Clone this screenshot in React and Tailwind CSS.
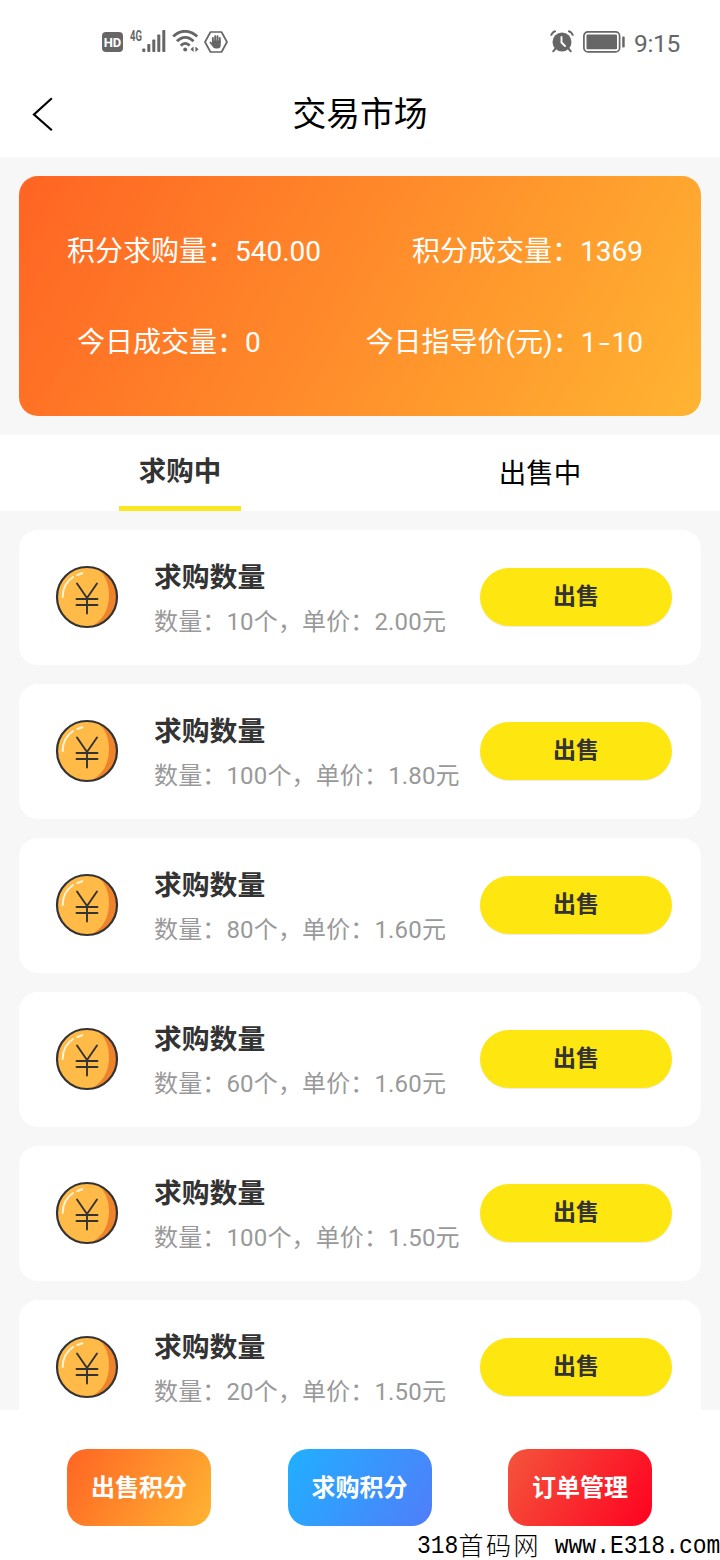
const orders = [
  { id: 1, amount: "10", price: "2.00" },
  { id: 2, amount: "100", price: "1.80" },
  { id: 3, amount: "80", price: "1.60" },
  { id: 4, amount: "60", price: "1.60" },
  { id: 5, amount: "100", price: "1.50" },
  { id: 6, amount: "20", price: "1.50" },
];

function StatusBar() {
  return (
    <div className="h-[72px] shrink-0 flex items-start justify-between pt-[30px] pl-[102px] pr-[40px] text-[#666666]">
      <div className="flex items-start">
        <span className="mt-[2px] w-[21px] h-[20px] rounded-[4px] bg-[#666666] text-white text-[13px] leading-[21px] font-bold text-center">
          HD
        </span>
        <span className="ml-[7px] w-[12px] text-[14px] leading-[12px] font-bold whitespace-nowrap origin-left scale-x-[0.680]">
          4G
        </span>
        {/* Signal */}
        <svg width="24" height="22" viewBox="0 0 24 22" fill="currentColor">
          <rect x="0.3" y="18.5" width="3" height="3.5" rx="0.8" />
          <rect x="5.3" y="14" width="3" height="8" rx="0.8" />
          <rect x="10.3" y="9.5" width="3" height="12.5" rx="0.8" />
          <rect x="15.3" y="4.5" width="3" height="17.5" rx="0.8" />
          <rect x="20.3" y="0" width="3" height="22" rx="0.8" />
        </svg>
        {/* Wifi */}
        <svg className="ml-[6px]" width="28" height="23" viewBox="0 0 28 23" fill="none" stroke="currentColor" strokeWidth="2.8">
          <path d="M1.2 6.5C8 -0.500 18 -0.500 25.2 6.5" />
          <path d="M5 11.3C10 6 16.5 6 21.5 11.3" />
          <path d="M8.8 15.7C11.5 12.7 15 12.7 17.6 15.7" />
          <circle cx="13.2" cy="19.5" r="2" fill="currentColor" stroke="none" />
          <path d="M21.6 16.500v5.500l-3.200-2.750zM23.4 16.500v5.500l3.200-2.750z" fill="currentColor" stroke="none" />
        </svg>
        {/* Hand in hexagon */}
        <svg className="ml-[4px]" width="24" height="24" viewBox="0 0 24 24">
          <path d="M6.5 2h11l5.500 10-5.500 10h-11L1 12z" fill="none" stroke="currentColor" strokeWidth="1.7" strokeLinejoin="round" />
          <path d="M8.9 12V8M11.200 11V6.200M13.500 11V6.200M15.800 12V8M6.500 12.500l2.500 3" fill="none" stroke="currentColor" strokeWidth="1.9" strokeLinecap="round" />
          <path d="M8 10.500h8.750v4.500q0 3.500-3.500 3.500h-1.500q-2.500 0-3.750-3z" fill="currentColor" />
        </svg>
      </div>

      <div className="flex items-start">
        {/* Alarm */}
        <svg width="24" height="24" viewBox="0 0 24 24" fill="none" stroke="currentColor" strokeLinecap="round">
          <circle cx="12" cy="12" r="9.5" fill="currentColor" stroke="none" />
          <path d="M1.3 4.800Q2.500 2.200 5 1.3M22.7 4.800Q21.500 2.200 19 1.3" strokeWidth="2" />
          <path d="M5.500 18.500l-2.300 2.800M18.500 18.500l2.300 2.800" strokeWidth="2" />
          <path d="M11.500 7v5.500l3.500 3.500" stroke="white" strokeWidth="1.9" />
        </svg>
        {/* Battery */}
        <svg className="ml-[9px]" width="43" height="24" viewBox="0 0 43 24">
          <rect x="0.9" y="1.9" width="35.7" height="20" rx="4" fill="none" stroke="currentColor" strokeWidth="1.7" />
          <rect x="3.5" y="4.5" width="30.5" height="14.8" rx="1" fill="currentColor" />
          <rect x="39.2" y="6.5" width="2.5" height="11" rx="1" fill="currentColor" />
        </svg>
        <span className="ml-[8px] w-[46px] text-[24.500px] leading-[27px] tracking-[-0.300px] whitespace-nowrap">9:15</span>
      </div>
    </div>
  );
}

function CoinIcon() {
  return (
    <svg className="w-[64px] h-[64px] shrink-0" viewBox="0 0 64 64" fill="none">
      <circle cx="32" cy="32" r="30" fill="#ee832b" />
      <path d="M32 2A30 30 0 1 0 36 61.700Q54 52 54 30Q54 13 43 4Q38 2 32 2z" fill="#ffba48" />
      <circle cx="32" cy="32" r="30" stroke="#333333" strokeWidth="2.2" />
      <path d="M7.700 32Q7.700 19 18 12M22.300 10l5-1.800" stroke="#fff3d8" strokeWidth="2" strokeLinecap="round" />
      <path d="M22 18.500l10 14.500 10-14.500M32 33v15.500M21.500 34h21M21.500 40h21" stroke="#333333" strokeWidth="1.9" strokeLinecap="round" strokeLinejoin="round" />
    </svg>
  );
}

function OrderCard({ amount, price }) {
  return (
    <div className="h-[135px] shrink-0 flex items-center bg-white rounded-[19px] pl-[36px] pr-[29px] pb-[2px]">
      <CoinIcon />
      <div className="ml-[35px] pt-[6px] flex-1 whitespace-nowrap">
        <h3 className="text-[27.800px] leading-[44px] font-bold text-[#333333]">求购数量</h3>
        <p className="text-[24px] leading-[44px] tracking-[0.150px] text-[#999999]">
          数量：{amount}个，单价：{price}元
        </p>
      </div>
      <button className="w-[192px] h-[58px] pt-[2px] shrink-0 rounded-full bg-[#fee611] text-[23px] font-bold text-[#333333] shadow-[0_1px_1px_rgba(0,0,0,0.08)]">
        出售
      </button>
    </div>
  );
}

export default function App() {
  return (
    <div
      lang="zh-CN"
      className="w-[720px] h-[1560px] flex flex-col overflow-hidden bg-[#f7f7f7] font-['Roboto','Noto_Sans_CJK_SC',sans-serif]"
    >
      <div className="h-[157px] shrink-0 flex flex-col bg-white">
        <StatusBar />
        <header className="h-[85px] grid grid-cols-[100px_1fr_100px] items-center">
          <svg className="ml-[32px] mb-[2px]" width="22" height="36" viewBox="0 0 22 36" fill="none" stroke="#000000" strokeWidth="2.2">
            <path d="M19 3L2 18.500L19 33.500" strokeLinecap="square" />
          </svg>
          <h1 className="text-center text-[33.800px] leading-[50px] text-black">交易市场</h1>
        </header>
      </div>

      {/* Summary */}
      <section className="mx-[19px] mt-[19px] h-[240px] pt-[3px] shrink-0 flex flex-col justify-center gap-[51px] rounded-[19px] bg-[linear-gradient(120deg,#ff6423,#ffb432)] text-[28px] leading-[40px] text-white whitespace-nowrap">
        <div className="flex justify-between pl-[48px] pr-[58px]">
          <span>积分求购量：540.00</span>
          <span>积分成交量：1369</span>
        </div>
        <div className="flex justify-between pl-[58px] pr-[58px]">
          <span>今日成交量：0</span>
          <span>
            今日指导价(元)：1<span className="inline-block w-[15px] text-center scale-x-[1.400]">-</span>10
          </span>
        </div>
      </section>

      {/* Tabs */}
      <nav className="mt-[19px] h-[76px] shrink-0 grid grid-cols-2 bg-white text-[27.500px] leading-[74px]">
        <button className="w-[122px] h-[76px] mx-auto border-b-[5px] border-[#f9e720] font-bold text-[#333333]">
          求购中
        </button>
        <button className="w-[122px] h-[76px] mx-auto pt-[1px] text-black">出售中</button>
      </nav>

      <main className="flex-1 min-h-0 overflow-hidden flex flex-col gap-[19px] px-[19px] pt-[19px]">
        {orders.map((order) => (
          <OrderCard key={order.id} amount={order.amount} price={order.price} />
        ))}
      </main>

      <footer className="relative h-[150px] shrink-0 flex justify-between items-start bg-white pt-[39px] pl-[67px] pr-[68px] text-[24px] font-bold text-white">
        <button className="w-[144px] h-[77px] rounded-[20px] bg-[linear-gradient(120deg,#ff6423,#ffb432)]">
          出售积分
        </button>
        <button className="w-[144px] h-[77px] rounded-[20px] bg-[linear-gradient(120deg,#20b0ff,#507dfa)]">
          求购积分
        </button>
        <button className="w-[144px] h-[77px] rounded-[20px] bg-[linear-gradient(120deg,#f4553c,#fe0120)]">
          订单管理
        </button>
        <div className="absolute right-0 bottom-0 w-[303px] h-[26px] flex text-black font-light text-[23px] leading-[28px] font-['Liberation_Mono','Noto_Sans_CJK_SC',monospace] whitespace-pre">
          <span className="origin-bottom scale-y-[1.120]">318</span>
          <span className="w-[83px] text-[25px] leading-[29px] tracking-[2.500px]">首码网</span>
          <span className="origin-bottom scale-y-[1.120]"> www.E318.com</span>
        </div>
      </footer>
    </div>
  );
}
